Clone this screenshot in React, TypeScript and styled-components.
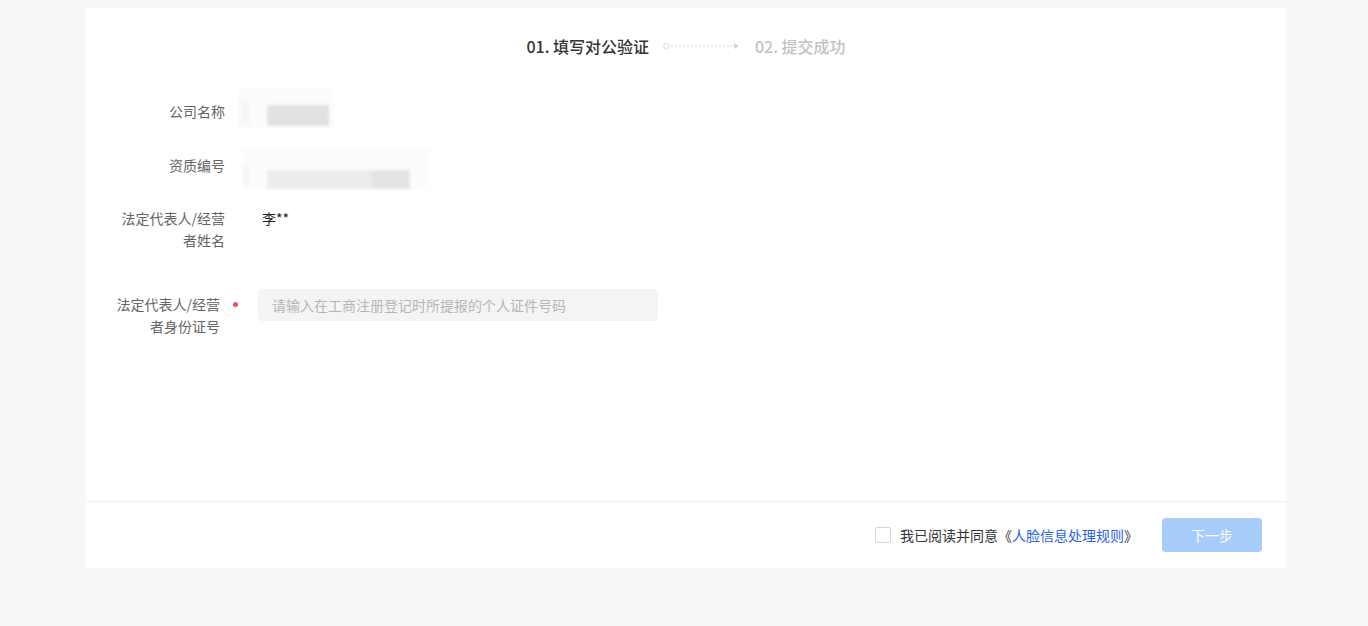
import React from "react";
import styled, { createGlobalStyle } from "styled-components";

const Global = createGlobalStyle`
  html, body { margin: 0; padding: 0; background: #f8f8f8; }
  body { font-family: "Noto Sans CJK SC", "Noto Sans", sans-serif; -webkit-font-smoothing: antialiased; }
  * { box-sizing: border-box; }
`;

const Page = styled.div`
  width: 1368px;
  height: 626px;
  padding: 8px 82px 0 86px;
  background: #f8f8f8;
`;

const Card = styled.div`
  width: 1200px;
  height: 560px;
  background: #fff;
  display: flex;
  flex-direction: column;
`;

const Body = styled.div`
  flex: 1;
  display: flex;
  flex-direction: column;
`;

const Steps = styled.div`
  display: flex;
  justify-content: center;
  align-items: center;
  padding-top: 28px;
  height: 48px;
`;

const StepText = styled.div<{ $active?: boolean }>`
  font-size: 16px;
  line-height: 20px;
  font-weight: 500;
  color: ${(p) => (p.$active ? "#333" : "#c2c2c2")};
`;

const Connector = styled.svg`
  margin: 0 15px 0 14px;
  display: block;
`;

const Form = styled.div`
  padding-top: 39px;
  display: flex;
  flex-direction: column;
`;

const Row = styled.div<{ $mb: number }>`
  display: flex;
  align-items: flex-start;
  margin-bottom: ${(p) => p.$mb}px;
`;

const Label = styled.div<{ $pt?: number }>`
  width: 172px;
  flex: none;
  display: flex;
  justify-content: flex-end;
  align-items: flex-start;
  padding-top: ${(p) => p.$pt ?? 0}px;
  padding-right: 33px;
`;

const LabelText = styled.div`
  max-width: 110px;
  text-align: right;
  font-size: 14px;
  line-height: 22px;
  color: #666;
`;

const RequiredLabel = styled(Label)`
  padding-right: 20px;
`;

const Star = styled.span`
  width: 5px;
  height: 5px;
  border-radius: 50%;
  background: #f25353;
  margin: 9px 0 0 13px;
  flex: none;
`;

const Value = styled.div`
  font-size: 14px;
  line-height: 22px;
  color: #222;
  padding-left: 4px;
`;

const Masked = styled.svg<{ $mt: number }>`
  display: block;
  margin-left: -20px;
  margin-top: ${(p) => p.$mt}px;
`;

const Input = styled.input`
  width: 400px;
  height: 32px;
  border: none;
  outline: none;
  border-radius: 4px;
  background: #f4f4f4;
  padding: 0 14px;
  font-family: inherit;
  font-size: 14px;
  color: #333;
  &::placeholder { color: #b5b5b5; }
`;

const Footer = styled.div`
  height: 67px;
  border-top: 1px solid #eeeeee;
  display: flex;
  justify-content: flex-end;
  align-items: center;
  padding-right: 24px;
`;

const Agree = styled.label`
  display: flex;
  align-items: center;
  font-size: 14px;
  line-height: 22px;
  color: #333;
  margin-right: 24px;
  cursor: pointer;
`;

const Box = styled.span`
  width: 16px;
  height: 16px;
  border: 1px solid #d6d6d6;
  border-radius: 2px;
  background: #fff;
  margin-right: 9px;
`;

const Link = styled.a`
  color: #2b62e8;
  text-decoration: none;
`;

const Button = styled.button`
  width: 100px;
  height: 34px;
  border: none;
  border-radius: 4px;
  background: #a6cdfa;
  color: #fff;
  font-family: inherit;
  font-size: 14px;
  cursor: not-allowed;
`;

function BlurName() {
  return (
    <Masked $mt={-7} width="110" height="44" viewBox="0 0 110 44">
      <defs>
        <filter id="b1" x="-20%" y="-20%" width="140%" height="140%">
          <feGaussianBlur stdDeviation="1.6" />
        </filter>
      </defs>
      <g filter="url(#b1)">
        <rect x="0" y="0" width="96" height="40" fill="#fcfcfc" />
        <rect x="3" y="12" width="8" height="26" fill="#f6f6f6" />
        <rect x="29" y="17" width="62" height="21" fill="#e2e2e2" />
        <rect x="55" y="34" width="36" height="4" fill="#dedede" />
      </g>
    </Masked>
  );
}

function BlurCode() {
  return (
    <Masked $mt={-2} width="200" height="46" viewBox="0 0 200 46">
      <defs>
        <filter id="b2" x="-20%" y="-20%" width="140%" height="140%">
          <feGaussianBlur stdDeviation="1.6" />
        </filter>
      </defs>
      <g filter="url(#b2)">
        <rect x="4" y="0" width="188" height="43" fill="#fcfcfc" />
        <rect x="5" y="20" width="6" height="18" fill="#f4f4f4" />
        <rect x="29" y="23" width="143" height="19" fill="#ececec" />
        <rect x="134" y="23" width="38" height="19" fill="#e4e4e4" />
      </g>
    </Masked>
  );
}

export default function App() {
  return (
    <>
      <Global />
      <Page>
        <Card>
          <Body>
            <Steps>
              <StepText $active>01. 填写对公验证</StepText>
              <Connector width="77" height="8" viewBox="0 0 77 8">
                <circle cx="3.5" cy="4" r="2.8" fill="none" stroke="#dcdcdc" strokeWidth="1" />
                <line x1="8" y1="4" x2="72" y2="4" stroke="#d4d4d4" strokeWidth="1" strokeDasharray="2 2" />
                <path d="M71 1 L76 4 L71 7 Z" fill="#d4d4d4" />
              </Connector>
              <StepText>02. 提交成功</StepText>
            </Steps>
            <Form>
              <Row $mb={17}>
                <Label $pt={5}>
                  <LabelText>公司名称</LabelText>
                </Label>
                <BlurName />
              </Row>
              <Row $mb={14}>
                <Label $pt={5}>
                  <LabelText>资质编号</LabelText>
                </Label>
                <BlurCode />
              </Row>
              <Row $mb={38}>
                <Label>
                  <LabelText>法定代表人/经营者姓名</LabelText>
                </Label>
                <Value>李**</Value>
              </Row>
              <Row $mb={0}>
                <RequiredLabel $pt={4}>
                  <LabelText>法定代表人/经营者身份证号</LabelText>
                  <Star />
                </RequiredLabel>
                <Input placeholder="请输入在工商注册登记时所提报的个人证件号码" />
              </Row>
            </Form>
          </Body>
          <Footer>
            <Agree>
              <Box />
              我已阅读并同意《<Link href="#">人脸信息处理规则</Link>》
            </Agree>
            <Button disabled>下一步</Button>
          </Footer>
        </Card>
      </Page>
    </>
  );
}
